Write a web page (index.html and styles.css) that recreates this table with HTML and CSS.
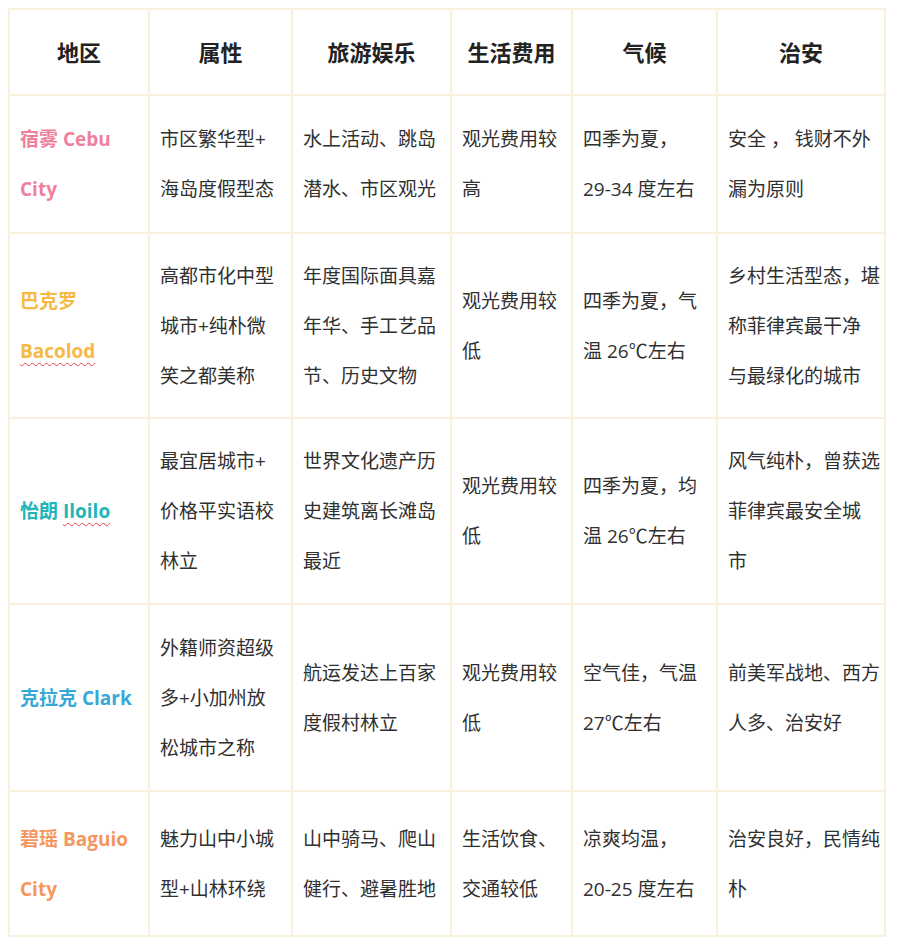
FILE: index.html
```html
<!DOCTYPE html>
<html lang="zh-CN">
<head>
<meta charset="utf-8">
<title>菲律宾城市对比</title>
<link rel="stylesheet" href="styles.css">
</head>
<body>
<table class="cmp">
  <colgroup>
    <col class="c1"><col class="c2"><col class="c3"><col class="c4"><col class="c5"><col class="c6">
  </colgroup>
  <thead>
    <tr class="r-head">
      <th>地区</th><th>属性</th><th>旅游娱乐</th><th>生活费用</th><th>气候</th><th>治安</th>
    </tr>
  </thead>
  <tbody>
    <tr class="r1">
      <td class="city cebu">宿雾 Cebu<br>City</td>
      <td>市区繁华型+<br>海岛度假型态</td>
      <td>水上活动、跳岛<br>潜水、市区观光</td>
      <td>观光费用较<br>高</td>
      <td>四季为夏，<br>29-34 度左右</td>
      <td>安全 ， 钱财不外<br>漏为原则</td>
    </tr>
    <tr class="r2">
      <td class="city bacolod">巴克罗<br><span class="spell">Bacolod</span></td>
      <td>高都市化中型<br>城市+纯朴微<br>笑之都美称</td>
      <td>年度国际面具嘉<br>年华、手工艺品<br>节、历史文物</td>
      <td>观光费用较<br>低</td>
      <td>四季为夏，气<br>温 26℃左右</td>
      <td>乡村生活型态，堪<br>称菲律宾最干净<br>与最绿化的城市</td>
    </tr>
    <tr class="r3">
      <td class="city iloilo">怡朗 <span class="spell">Iloilo</span></td>
      <td>最宜居城市+<br>价格平实语校<br>林立</td>
      <td>世界文化遗产历<br>史建筑离长滩岛<br>最近</td>
      <td>观光费用较<br>低</td>
      <td>四季为夏，均<br>温 26℃左右</td>
      <td>风气纯朴，曾获选<br>菲律宾最安全城<br>市</td>
    </tr>
    <tr class="r4">
      <td class="city clark">克拉克 Clark</td>
      <td>外籍师资超级<br>多+小加州放<br>松城市之称</td>
      <td>航运发达上百家<br>度假村林立</td>
      <td>观光费用较<br>低</td>
      <td>空气佳，气温<br>27℃左右</td>
      <td>前美军战地、西方<br>人多、治安好</td>
    </tr>
    <tr class="r5">
      <td class="city baguio">碧瑶 Baguio<br>City</td>
      <td>魅力山中小城<br>型+山林环绕</td>
      <td>山中骑马、爬山<br>健行、避暑胜地</td>
      <td>生活饮食、<br>交通较低</td>
      <td>凉爽均温，<br>20-25 度左右</td>
      <td>治安良好，民情纯<br>朴</td>
    </tr>
  </tbody>
</table>
</body>
</html>
```

FILE: styles.css
```css
html, body {
  margin: 0;
  padding: 0;
  background: #ffffff;
}

body {
  padding: 8px;
  font-family: "Open Sans", "Noto Sans CJK SC", sans-serif;
  color: #303030;
}

.cmp {
  border-collapse: collapse;
  table-layout: fixed;
  width: 876px;
}

.c1 { width: 140px; }
.c2 { width: 143px; }
.c3 { width: 159px; }
.c4 { width: 121px; }
.c5 { width: 145px; }
.c6 { width: 168px; }

.cmp th,
.cmp td {
  border: 2px solid #f9f1dc;
  vertical-align: middle;
  white-space: nowrap;
  overflow: hidden;
}

.cmp th {
  font-size: 22px;
  font-weight: 700;
  color: #222222;
  text-align: center;
  padding: 0;
  line-height: 30px;
}

.cmp td {
  font-size: 19px;
  line-height: 50px;
  padding: 0 6px 0 10px;
  text-align: left;
}

.r-head { height: 86px; }
.r1 { height: 138px; }
.r2 { height: 185px; }
.r3 { height: 186px; }
.r4 { height: 187px; }
.r5 { height: 145px; }

.city {
  font-weight: 700;
}

.cebu { color: #ef7f9c; }
.bacolod { color: #f6b943; }
.iloilo { color: #1fb5b8; }
.clark { color: #38a8d8; }
.baguio { color: #f5975f; }

.spell {
  text-decoration: underline wavy #e8414a;
  text-decoration-thickness: 1px;
  text-underline-offset: 4px;
}
```
